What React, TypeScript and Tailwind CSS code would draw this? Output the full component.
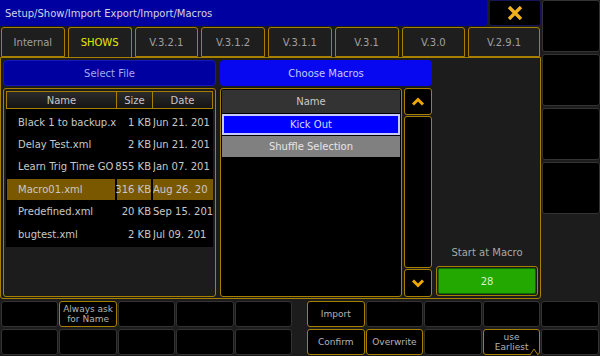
import React from "react";

const tabs = ["Internal", "SHOWS", "V.3.2.1", "V.3.1.2", "V.3.1.1", "V.3.1", "V.3.0", "V.2.9.1"];

const files = [
  { name: "Black 1 to backup.x", size: "1 KB", date: "Jun 21. 201" },
  { name: "Delay Test.xml", size: "2 KB", date: "Jun 21. 201" },
  { name: "Learn Trig Time GO", size: "855 KB", date: "Jan 07. 201" },
  { name: "Macro01.xml", size: "316 KB", date: "Aug 26. 20", selected: true },
  { name: "Predefined.xml", size: "20 KB", date: "Sep 15. 201" },
  { name: "bugtest.xml", size: "2 KB", date: "Jul 09. 201" },
];

function Chevron({ up }: { up?: boolean }) {
  return (
    <svg width="14" height="9" viewBox="0 0 14 9">
      <path
        d={up ? "M2 7.5 L7 2.5 L12 7.5" : "M2 1.5 L7 6.5 L12 1.5"}
        fill="none"
        stroke="#f0a800"
        strokeWidth="3"
      />
    </svg>
  );
}

function Key({ label, active, notch }: { label?: React.ReactNode; active?: boolean; notch?: boolean }) {
  return (
    <div
      className={`relative flex h-[26px] items-center justify-center rounded-[3px] border bg-black text-center text-[9px] leading-[10px] text-[#b4b4b4] ${
        active ? "border-[#a88000]" : "border-[#333333]"
      }`}
    >
      {label}
      {notch && (
        <svg className="absolute bottom-[-1px] right-[1px]" width="8" height="6" viewBox="0 0 8 6">
          <path d="M0 6 L4 0 L8 6" fill="#000" stroke="#a88000" strokeWidth="1" />
        </svg>
      )}
    </div>
  );
}

export default function App() {
  return (
    <div
      className="flex h-[356px] w-[600px] flex-col bg-[#1c1c1c] text-[10px] text-[#c8c8c8]"
      style={{ fontFamily: '"DejaVu Sans", sans-serif' }}
    >
      <div className="flex h-[299px]">
        {/* main */}
        <div className="flex w-[541px] flex-col">
          <div className="flex h-[26px] gap-[2px]">
            <div className="flex flex-1 items-center rounded-br-[3px] bg-[#0000a0] pl-[5px] text-[#d2d2e6]">
              Setup/Show/Import Export/Import/Macros
            </div>
            <div className="flex w-[52px] items-center justify-center rounded-[3px] border border-[#14145a] bg-black">
              <svg width="16" height="14" viewBox="0 0 16 14">
                <path d="M2 1 L14 13 M14 1 L2 13" stroke="#f0b020" strokeWidth="3.4" />
              </svg>
            </div>
          </div>
          <div className="mt-[1px] flex h-[30px] gap-[3px] px-[1px]">
            {tabs.map((t, i) => (
              <div
                key={t}
                className={`flex items-center justify-center rounded-t-[3px] border border-[#a88000] bg-[#1e1e1e] ${
                  i === 7 ? "w-[72px]" : "w-[64px]"
                } ${t === "SHOWS" ? "border-b-0 text-[#e6e600]" : "text-[#a0a0a0]"}`}
              >
                {t}
              </div>
            ))}
          </div>
          <div className="flex flex-1 gap-[4px] rounded-b-[3px] border border-[#a88000] bg-[#1c1c1c] p-[2px] pb-[1px]">
            {/* select file */}
            <div className="flex w-[213px] flex-col gap-[2px]">
              <div className="flex h-[26px] items-center justify-center rounded-[4px] border border-[#1818b8] bg-[#0000a0] text-[#a8a8f0]">
                Select File
              </div>
              <div className="flex flex-1 flex-col rounded-[3px] border border-[#a88000] p-[2px]">
                <div className="flex h-[18px] bg-gradient-to-b from-[#2c2c2c] to-[#141414]">
                  <div className="flex w-[111px] items-center justify-center border border-[#a88000]">Name</div>
                  <div className="flex w-[36px] items-center justify-center border border-l-0 border-[#a88000]">Size</div>
                  <div className="flex flex-1 items-center justify-center border border-l-0 border-[#a88000]">Date</div>
                </div>
                <div className="flex flex-col bg-black pt-[2px] pb-[2px]">
                  {files.map((f) => (
                    <div key={f.name} className="flex h-[22.4px] gap-[2px] overflow-hidden whitespace-nowrap py-[1px] pl-[1px]">
                      <div className={`relative z-10 flex w-[108px] items-center pl-[11px] ${f.selected ? "bg-[#7a5800]" : ""}`}>
                        {f.name}
                      </div>
                      <div className={`flex w-[34px] items-center justify-end ${f.selected ? "bg-[#7a5800]" : ""}`}>
                        {f.size}
                      </div>
                      <div className={`flex flex-1 items-center overflow-hidden ${f.selected ? "bg-[#7a5800]" : ""}`}>
                        {f.date}
                      </div>
                    </div>
                  ))}
                </div>
              </div>
            </div>
            {/* choose macros */}
            <div className="flex w-[212px] flex-col gap-[2px]">
              <div className="flex h-[26px] items-center justify-center rounded-[4px] bg-[#0808f0] text-[#c8c8ff]">
                Choose Macros
              </div>
              <div className="flex flex-1 gap-[2px]">
                <div className="flex flex-1 flex-col rounded-[3px] border border-[#a88000] bg-black p-[1px]">
                  <div className="flex h-[23px] items-center justify-center bg-[#333333]">Name</div>
                  <div className="mt-[1px] flex h-[21px] items-center justify-center border-2 border-[#c8c8ff] bg-[#0000ff] text-[#d8d8ff]">
                    Kick Out
                  </div>
                  <div className="mt-[1px] flex h-[21px] items-center justify-center bg-[#808080] text-[#e6e6e6]">
                    Shuffle Selection
                  </div>
                </div>
                <div className="flex w-[28px] flex-col gap-[1px]">
                  <div className="flex h-[27px] items-center justify-center rounded-[3px] border border-[#a88000] bg-black">
                    <Chevron up />
                  </div>
                  <div className="flex-1 rounded-[3px] border border-[#a88000] bg-black" />
                  <div className="flex h-[28px] items-center justify-center rounded-[3px] border border-[#a88000] bg-black">
                    <Chevron />
                  </div>
                </div>
              </div>
            </div>
            {/* start at macro */}
            <div className="flex flex-1 flex-col items-center justify-end pb-[1px]">
              <div className="mb-[6px] text-[#a8a8a8]">Start at Macro</div>
              <div className="w-full rounded-[3px] border border-[#a88000] p-[1px]">
                <div className="flex h-[26px] items-center justify-center rounded-[2px] border border-[#0c6a00] bg-[#22a800] text-[#d8f0d0]">
                  28
                </div>
              </div>
            </div>
          </div>
        </div>
        {/* right column */}
        <div className="flex w-[59px] flex-col gap-[2px] pl-[1px]">
          {[0, 1, 2, 3].map((i) => (
            <div key={i} className="h-[52px] rounded-[3px] border border-[#333333] bg-black" />
          ))}
        </div>
      </div>
      {/* bottom keys */}
      <div className="mt-[2px] flex flex-col gap-[2px] pl-[1px]">
        <div className="flex">
          <div className="grid w-[291px] grid-cols-5 gap-[1px]">
            <Key />
            <Key label={<>Always ask<br />for Name</>} active />
            <Key />
            <Key />
            <Key />
          </div>
          <div className="ml-[15px] grid w-[292px] grid-cols-5 gap-[1px]">
            <Key label="Import" active />
            <Key />
            <Key />
            <Key />
            <Key />
          </div>
        </div>
        <div className="flex">
          <div className="grid w-[291px] grid-cols-5 gap-[1px]">
            <Key />
            <Key />
            <Key />
            <Key />
            <Key />
          </div>
          <div className="ml-[15px] grid w-[292px] grid-cols-5 gap-[1px]">
            <Key label="Confirm" active />
            <Key label="Overwrite" active />
            <Key />
            <Key label={<>use<br />Earliest</>} active notch />
            <Key />
          </div>
        </div>
      </div>
    </div>
  );
}
